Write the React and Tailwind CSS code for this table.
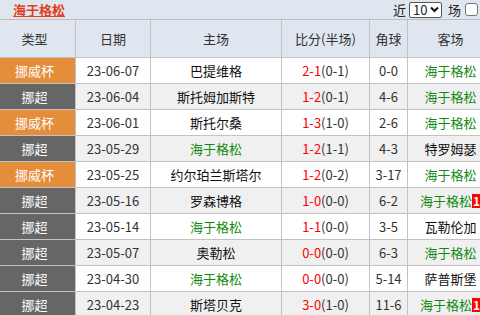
import React from "react";

const rows = [
  ["挪威杯", "23-06-07", "巴提维格", false, "2-1", "(0-1)", "0-0", "海于格松", true, false],
  ["挪超", "23-06-04", "斯托姆加斯特", false, "1-2", "(0-1)", "4-6", "海于格松", true, false],
  ["挪威杯", "23-06-01", "斯托尔桑", false, "1-3", "(1-0)", "2-6", "海于格松", true, false],
  ["挪超", "23-05-29", "海于格松", true, "1-2", "(1-1)", "4-3", "特罗姆瑟", false, false],
  ["挪威杯", "23-05-25", "约尔珀兰斯塔尔", false, "1-2", "(0-2)", "3-17", "海于格松", true, false],
  ["挪超", "23-05-16", "罗森博格", false, "1-0", "(0-0)", "6-2", "海于格松", true, true],
  ["挪超", "23-05-14", "海于格松", true, "1-1", "(0-0)", "3-5", "瓦勒伦加", false, false],
  ["挪超", "23-05-07", "奥勒松", false, "0-0", "(0-0)", "6-3", "海于格松", true, false],
  ["挪超", "23-04-30", "海于格松", true, "0-0", "(0-0)", "5-14", "萨普斯堡", false, false],
  ["挪超", "23-04-23", "斯塔贝克", false, "3-0", "(1-0)", "11-6", "海于格松", true, true],
];

const cols = "grid grid-cols-[76px_75px_131px_88px_38px_86px] w-[494px]";
const cell = "flex items-center justify-center border-r border-b border-[#c2c2c2] whitespace-nowrap";

export default function App() {
  return (
    <div
      className="w-[480px] h-[315px] overflow-hidden bg-white text-[13px] text-[#222]"
      style={{ fontFamily: '"Noto Sans CJK SC", "Noto Sans", sans-serif' }}
    >
      <div className="h-[20px] bg-[#dfe6ef] border-b border-[#bdbdbd] flex items-center justify-between pl-[13px] pr-[2px]">
        <span className="text-[#e0401a] font-bold underline text-[13px] leading-none">海于格松</span>
        <div className="flex items-center gap-[3px] leading-none">
          <span>近</span>
          <div className="w-[33px] h-[16px] bg-white border border-[#555] rounded-[2px] flex items-center justify-between pl-[3px] pr-[2px]">
            <span className="text-[13px]">10</span>
            <svg width="9" height="7" viewBox="0 0 9 7">
              <path d="M1 1.5 L4.5 5 L8 1.5" stroke="#111" strokeWidth="2" fill="none" />
            </svg>
          </div>
          <span className="ml-[3px]">场</span>
          <div className="w-[13px] h-[13px] bg-white border border-[#777] rounded-[3px] ml-[1px]" />
        </div>
      </div>
      <div className={`${cols} h-[38px] bg-[#dfe6ef] text-[#333]`}>
        <div className={`${cell} pr-[6px]`}>类型</div>
        <div className={cell}>日期</div>
        <div className={cell}>主场</div>
        <div className={cell}>比分(半场)</div>
        <div className={cell}>角球</div>
        <div className={cell}>客场</div>
      </div>
      {rows.map((r, i) => {
        const bg = i % 2 === 0 ? "bg-white" : "bg-[#f0f0f0]";
        return (
          <div key={i} className={`${cols} h-[26px] ${bg}`}>
            <div className={`${cell} pr-[6px] text-white ${r[0] === "挪威杯" ? "bg-[#e48d3b]" : "bg-[#666666]"}`}>{r[0]}</div>
            <div className={`${cell} text-[#333]`}>{r[1]}</div>
            <div className={`${cell} ${r[3] ? "text-[#118a11]" : "text-[#111]"}`}>{r[2]}</div>
            <div className={`${cell} text-[#333]`}>
              <span className="text-[#ff0000]">{r[4]}</span>
              <span>{r[5]}</span>
            </div>
            <div className={`${cell} text-[#333]`}>{r[6]}</div>
            <div className={`${cell} ${r[8] ? "text-[#118a11]" : "text-[#111]"}`}>
              <span>{r[7]}</span>
              {r[9] ? (
                <span className="bg-[#ff0000] text-white font-bold text-[12px] leading-[14px] px-[1px]">1</span>
              ) : null}
            </div>
          </div>
        );
      })}
    </div>
  );
}
